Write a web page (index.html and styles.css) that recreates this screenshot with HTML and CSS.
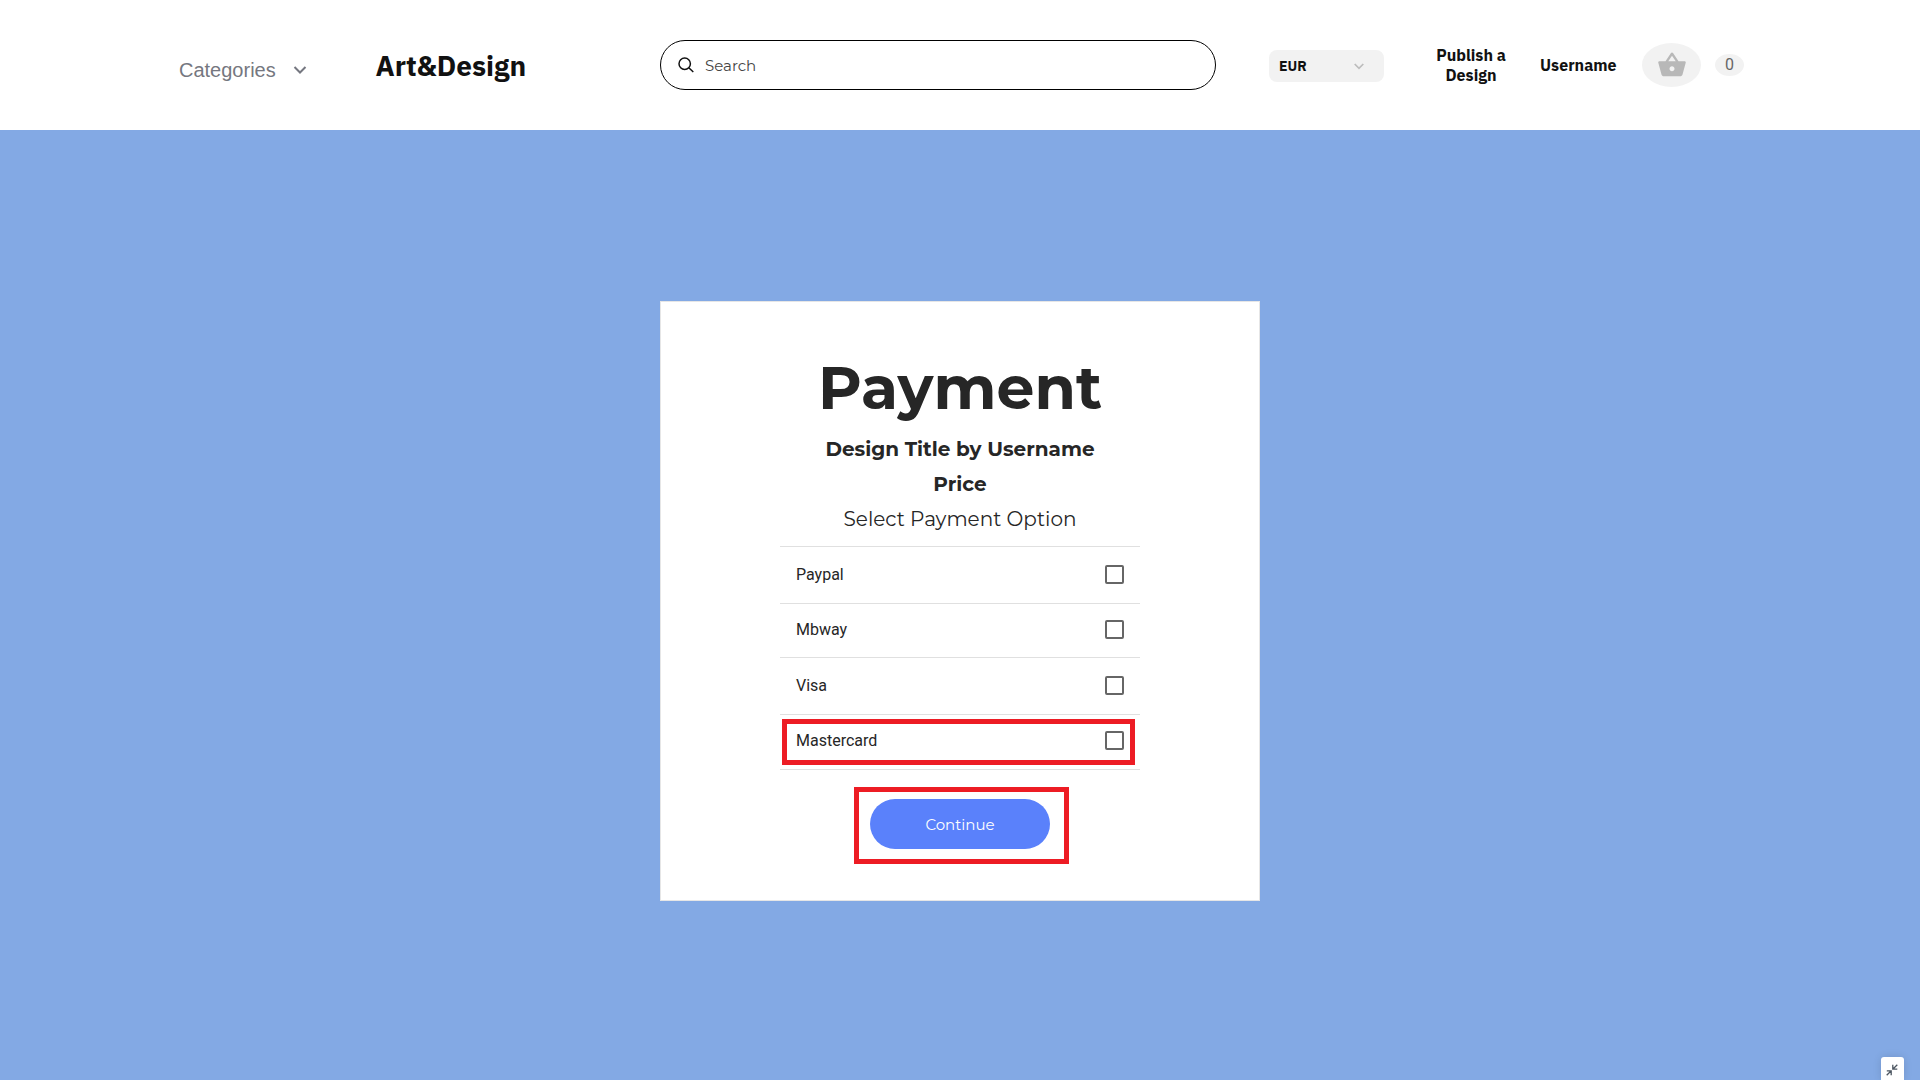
FILE: index.html
```html
<!DOCTYPE html>
<html lang="en">
<head>
<meta charset="utf-8">
<title>Art&amp;Design – Payment</title>
<link rel="stylesheet" href="styles.css">
</head>
<body>
<header class="header">
  <div class="categories">
    <span>Categories</span>
    <svg class="categories-arrow" width="14" height="9" viewBox="0 0 14 9" fill="none" stroke="#757780" stroke-width="2"><path d="M1.500 1 7 6.500 12.500 1"/></svg>
  </div>
  <div class="logo">Art&amp;Design</div>
  <div class="search">
    <svg width="16" height="16" viewBox="0 0 16 16" fill="none" stroke="#111" stroke-width="1.500"><circle cx="6.700" cy="6.700" r="5.700"/><path d="m10.800 10.800 4.500 4.200"/></svg>
    <span>Search</span>
  </div>
  <div class="currency">
    <span>EUR</span>
    <svg width="10" height="7" viewBox="0 0 10 7" fill="none" stroke="#bdbdbd" stroke-width="1.700"><path d="m.7 1 4.300 4.400L9.300 1"/></svg>
  </div>
  <div class="nav publish">Publish a Design</div>
  <div class="nav username">Username</div>
  <div class="basket">
    <svg width="30" height="30" viewBox="0 0 24 24" fill="#b8b8b8"><path d="M17.210 9l-4.380-6.560c-.19-.28-.51-.42-.83-.42-.32 0-.64.14-.83.43L6.790 9H2c-.55 0-1 .45-1 1 0 .09.010.18.040.27l2.540 9.270c.23.84 1 1.460 1.920 1.460h13c.92 0 1.690-.62 1.930-1.460l2.540-9.270L23 10c0-.55-.45-1-1-1h-4.790zM9 9l3-4.400L15 9H9zm3 8c-1.100 0-2-.9-2-2s.9-2 2-2 2 .9 2 2-.9 2-2 2z"/></svg>
  </div>
  <div class="count">0</div>
</header>
<main class="main">
  <section class="card">
    <h1 class="title">Payment</h1>
    <p class="line strong">Design Title by Username</p>
    <p class="line strong">Price</p>
    <p class="line">Select Payment Option</p>
    <ul class="options">
      <li class="option"><span>Paypal</span><i class="box"></i></li>
      <li class="option mbway"><span>Mbway</span><i class="box"></i></li>
      <li class="option"><span>Visa</span><i class="box"></i></li>
      <li class="option mastercard"><span>Mastercard</span><i class="box"></i><b class="mark mark-option"></b></li>
    </ul>
    <div class="action">
      <button class="continue">Continue</button>
      <b class="mark mark-action"></b>
    </div>
  </section>
  <div class="shrink">
    <svg width="12" height="12" viewBox="0 0 12 12" fill="none" stroke="#4c5661" stroke-width="1.300"><path d="M11.300.7 7 5M6.800.8v4.400h4.500M.7 11.300 5 7M.8 6.800h4.400v4.500"/></svg>
  </div>
</main>
</body>
</html>
```
FILE: styles.css
```css
* { box-sizing: border-box; }
body { margin: 0; background: #fff; font-family: "Montserrat", "Inter", sans-serif; color: #262626; }

.header { display: flex; align-items: center; height: 130px; }
.categories { display: flex; align-items: center; width: 196.5px; margin-left: 179px; padding-top: 10px; font: 20px/24px "Liberation Sans", sans-serif; color: #757780; }
.categories-arrow { margin-left: 17px; }
.logo { width: 284.5px; padding-top: 2px; font: 700 28px/36px "IBM Plex Sans", sans-serif; color: #111; }
.search { display: flex; align-items: center; gap: 11.5px; width: 556px; height: 50px; padding-left: 16.5px; border: 1px solid #000; border-radius: 25px; font-size: 15px; color: #444; }
.currency { display: flex; align-items: center; justify-content: space-between; width: 115px; height: 32px; margin: 2px 0 0 53px; padding: 0 20.5px 0 10px; border-radius: 8px; background: #f2f2f2; font: 700 14px/18px "IBM Plex Sans", sans-serif; color: #111; }
.nav { font: 700 16px/20px "IBM Plex Sans", sans-serif; color: #111; text-align: center; }
.publish { width: 86px; margin-left: 44px; }
.username { margin-left: 26px; }
.basket { display: flex; align-items: center; justify-content: center; width: 59px; height: 44px; margin-left: 25px; padding-left: 1px; border-radius: 50%; background: #f2f2f2; }
.count { width: 29px; height: 22px; margin-left: 14px; padding-left: 1px; border-radius: 50%; background: #f2f2f2; font: 16px/22px "Roboto", sans-serif; color: #666; text-align: center; }

.main { position: relative; display: flex; justify-content: center; height: 950px; padding-top: 171px; background: #83a9e4; }
.card { display: flex; flex-direction: column; align-items: center; width: 600px; height: 600px; padding-top: 49px; border: 1px solid #e6e6e6; background: #fff; }
.title { margin: 0 0 8px; font-size: 60px; line-height: 73px; font-weight: 700; }
.line { margin: 0; font-size: 20px; line-height: 35px; }
.strong { font-weight: 700; }

.options { width: 360px; margin: 9px 0 0; padding: 0; border-top: 1px solid #e0e0e0; list-style: none; }
.option { position: relative; display: flex; align-items: center; justify-content: space-between; height: 57px; padding: 0 16px; border-bottom: 1px solid #e0e0e0; font: 16px/24px "Roboto", sans-serif; color: #262626; }
.mbway { height: 54px; padding-bottom: 1px; }
.mastercard { height: 55px; padding-bottom: 2px; }
.box { width: 19px; height: 19px; margin-bottom: 1px; border: 2px solid #666; border-radius: 2px; }

.action { position: relative; margin-top: 29px; }
.continue { display: block; width: 180px; height: 50px; padding: 2px 0 0; border: 0; border-radius: 25px; background: #5a81fb; font: 15px/20px "Montserrat", sans-serif; color: #fff; }

.mark { position: absolute; border: 5px solid #ed1c24; }
.mark-option { left: 2px; top: 4px; width: 353px; height: 46px; }
.mark-action { left: -16px; top: -12px; width: 215px; height: 77px; }

.shrink { position: absolute; left: 1880.5px; bottom: 0; display: flex; justify-content: center; width: 23px; height: 23.5px; padding-top: 7px; border-radius: 3px 3px 0 0; background: #fff; box-shadow: 0 0 8px rgba(0, 0, 0, .12); }
```
